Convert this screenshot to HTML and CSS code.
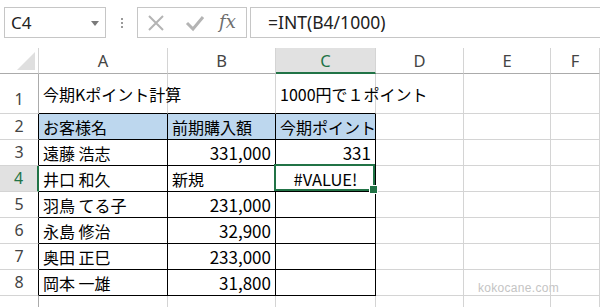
FILE: index.html
```html
<!DOCTYPE html>
<html lang="ja">
<head>
    <meta charset="UTF-8">
    <title>今期Kポイント計算</title>
    <link rel="stylesheet" href="styles.css">
</head>
<body>
    <div class="toolbar">
        <div class="namebox">
            <span>C4</span>
            <svg class="dropdown" width="8" height="5" viewBox="0 0 8 5"><path d="M0 0 H8 L4 5 Z" fill="#7a7a7a"/></svg>
        </div>
        <div class="grip"><i></i><i></i><i></i></div>
        <div class="fx-buttons">
            <svg width="18" height="18" viewBox="0 0 18 18"><path d="M2 2 L16 16 M16 2 L2 16" stroke="#b4b4b4" stroke-width="2" fill="none"/></svg>
            <svg class="check" width="20" height="18" viewBox="0 0 20 18"><path d="M2 9 L8 15 L18 3" stroke="#b4b4b4" stroke-width="3" fill="none"/></svg>
            <span class="fx">fx</span>
        </div>
        <div class="formula">=INT(B4/1000)</div>
    </div>

    <div class="sheet">
        <div class="corner"><div class="corner-tri"></div></div>
        <div class="colhead">A</div>
        <div class="colhead">B</div>
        <div class="colhead active">C</div>
        <div class="colhead">D</div>
        <div class="colhead">E</div>
        <div class="colhead">F</div>

        <div class="rowhead tall">1</div>
        <div class="cell tb">今期Kポイント計算</div>
        <div class="cell tb"></div>
        <div class="cell tb over">1000円で１ポイント</div>
        <div class="cell"></div>
        <div class="cell"></div>
        <div class="cell"></div>

        <div class="rowhead edge">2</div>
        <div class="cell box head">お客様名</div>
        <div class="cell box head">前期購入額</div>
        <div class="cell box head">今期ポイント</div>
        <div class="cell"></div>
        <div class="cell"></div>
        <div class="cell"></div>

        <div class="rowhead edge">3</div>
        <div class="cell box">遠藤 浩志</div>
        <div class="cell box num">331,000</div>
        <div class="cell box num">331</div>
        <div class="cell"></div>
        <div class="cell"></div>
        <div class="cell"></div>

        <div class="rowhead edge active">4</div>
        <div class="cell box">井口 和久</div>
        <div class="cell box">新規</div>
        <div class="cell box err selected">#VALUE!</div>
        <div class="cell"></div>
        <div class="cell"></div>
        <div class="cell"></div>

        <div class="rowhead edge">5</div>
        <div class="cell box">羽鳥 てる子</div>
        <div class="cell box num">231,000</div>
        <div class="cell box"></div>
        <div class="cell"></div>
        <div class="cell"></div>
        <div class="cell"></div>

        <div class="rowhead edge">6</div>
        <div class="cell box">永島 修治</div>
        <div class="cell box num">32,900</div>
        <div class="cell box"></div>
        <div class="cell"></div>
        <div class="cell"></div>
        <div class="cell"></div>

        <div class="rowhead edge">7</div>
        <div class="cell box">奥田 正巳</div>
        <div class="cell box num">233,000</div>
        <div class="cell box"></div>
        <div class="cell"></div>
        <div class="cell"></div>
        <div class="cell"></div>

        <div class="rowhead edge">8</div>
        <div class="cell box">岡本 一雄</div>
        <div class="cell box num">31,800</div>
        <div class="cell box"></div>
        <div class="cell"></div>
        <div class="cell"></div>
        <div class="cell"></div>

        <div class="rowhead"></div>
        <div class="cell"></div>
        <div class="cell"></div>
        <div class="cell"></div>
        <div class="cell"></div>
        <div class="cell"></div>
        <div class="cell"></div>

        <div class="watermark">kokocane.com</div>
    </div>
</body>
</html>
```

FILE: styles.css
```css
* {
    box-sizing: border-box;
}

body {
    margin: 0;
    width: 600px;
    height: 307px;
    overflow: hidden;
    background-color: #ffffff;
    font-family: "Noto Sans CJK JP", sans-serif;
}

/* formula bar */
.toolbar {
    height: 48px;
    display: flex;
    align-items: flex-start;
    padding-top: 7px;
    padding-left: 4px;
}

.namebox {
    width: 102px;
    height: 31px;
    border: 1px solid #c6c6c6;
    display: flex;
    align-items: center;
    justify-content: space-between;
    padding: 0 6px 0 6px;
    font-family: "Noto Sans", sans-serif;
    font-size: 17px;
    color: #222222;
}

.dropdown {
    margin-top: 2px;
}

.grip {
    width: 31px;
    height: 31px;
    display: flex;
    flex-direction: column;
    align-items: center;
    justify-content: center;
    gap: 2px;
}

.grip i {
    width: 2px;
    height: 2px;
    background-color: #9a9a9a;
}

.fx-buttons {
    width: 110px;
    height: 31px;
    border: 1px solid #c6c6c6;
    display: flex;
    align-items: center;
    padding-left: 9px;
    gap: 18px;
}

.check {
    margin-left: 2px;
}

.fx {
    font-family: "DejaVu Serif", serif;
    font-style: italic;
    font-size: 18px;
    color: #6e6e6e;
    margin-left: -4px;
    margin-bottom: 2px;
}

.formula {
    flex: 1;
    height: 31px;
    margin-left: 3px;
    border-top: 1px solid #c6c6c6;
    border-bottom: 1px solid #c6c6c6;
    border-left: 1px solid #c6c6c6;
    padding-left: 17px;
    line-height: 28px;
    font-family: "Noto Sans", sans-serif;
    font-size: 17.5px;
    color: #222222;
}

/* grid */
.sheet {
    position: relative;
    display: grid;
    grid-template-columns: 39px 129px 108px 100px 88px 87px 1fr;
    grid-template-rows: 26px 40px repeat(7, 26px) 20px;
    font-size: 16px;
    color: #000000;
}

.corner {
    border-right: 1px solid #d4d4d4;
    border-bottom: 1px solid #ababab;
    position: relative;
}

.corner-tri {
    position: absolute;
    right: 3px;
    bottom: 3px;
    width: 0;
    height: 0;
    border-left: 18px solid transparent;
    border-bottom: 18px solid #dfdfdf;
}

.colhead {
    display: flex;
    align-items: center;
    justify-content: center;
    border-right: 1px solid #d4d4d4;
    border-bottom: 1px solid #ababab;
    font-family: "Noto Sans", sans-serif;
    font-size: 16.5px;
    color: #444444;
}

.colhead.active {
    background-color: #e1e1e1;
    color: #217346;
    border-bottom: 2px solid #217346;
}

.rowhead {
    display: flex;
    align-items: flex-end;
    justify-content: center;
    padding-bottom: 2px;
    border-right: 1px solid #ababab;
    border-bottom: 1px solid #d4d4d4;
    font-family: "Noto Sans", sans-serif;
    font-size: 16px;
    color: #444444;
}

.rowhead.tall {
    padding-bottom: 3px;
}

.rowhead.edge {
    border-right-color: #000000;
}

.rowhead.active {
    background-color: #e1e1e1;
    color: #217346;
    border-right: 2px solid #217346;
}

.cell {
    display: flex;
    align-items: center;
    padding: 0 4px;
    white-space: nowrap;
    border-right: 1px solid #d4d4d4;
    border-bottom: 1px solid #d4d4d4;
}

.cell.over {
    overflow: visible;
}

.cell.tb {
    border-bottom-color: #000000;
}

.cell.box {
    border-right-color: #000000;
    border-bottom-color: #000000;
}

.cell.head {
    background-color: #bdd7ee;
}

.cell.num {
    justify-content: flex-end;
    font-size: 17px;
}

.cell.err {
    justify-content: center;
    font-size: 16.5px;
}

.selected {
    position: relative;
}

.selected::after {
    content: "";
    position: absolute;
    top: -2px;
    left: -2px;
    right: 0;
    bottom: 0;
    border: 2px solid #217346;
}

.selected::before {
    content: "";
    position: absolute;
    right: -3px;
    bottom: -3px;
    width: 7px;
    height: 7px;
    background-color: #217346;
    border: 1px solid #ffffff;
    z-index: 2;
}

.watermark {
    position: absolute;
    left: 478px;
    top: 233px;
    font-family: "Liberation Sans", sans-serif;
    font-size: 12px;
    color: #c4c4c4;
    text-shadow: 0 0 1px #ffffff;
    letter-spacing: 0.3px;
}
```
